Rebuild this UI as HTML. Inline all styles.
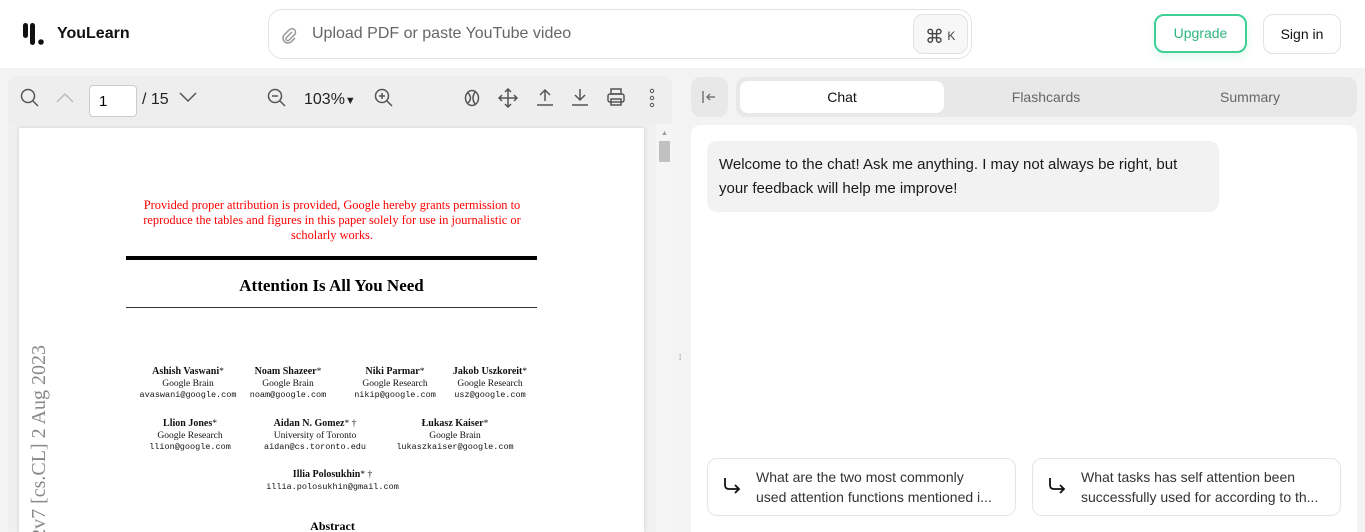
<!DOCTYPE html>
<html style="height:532px;overflow:hidden"><head><style>
*{margin:0;padding:0;box-sizing:border-box}
body{width:1365px;height:532px;overflow:hidden;background:#f3f3f3;font-family:"Liberation Sans",sans-serif;position:relative}
.hdr{position:absolute;left:0;top:0;width:1365px;height:68px;background:#fff}
.abs{position:absolute}
.serif{font-family:"Liberation Serif",serif}
.ic{position:absolute;stroke:#555;fill:none;stroke-width:1.5}
.au{position:absolute;text-align:center;font-family:"Liberation Serif",serif;font-size:9.5px;line-height:11.5px;color:#111}
.au b{font-size:10px}
.au .m{font-family:"Liberation Mono",monospace;font-size:8.5px}
</style></head><body>
<div class="hdr"></div>
<svg class="abs" style="left:22px;top:22px" width="30" height="24" viewBox="0 0 30 24"><rect x="1" y="1" width="5" height="15" rx="2.5" fill="#111"/><rect x="8" y="1" width="5" height="22" rx="2.5" fill="#111"/><circle cx="19" cy="20" r="2.8" fill="#111"/></svg>
<div class="abs" style="left:57px;top:25px;font-size:16px;font-weight:bold;color:#111">YouLearn</div>
<div class="abs" style="left:268px;top:9px;width:704px;height:50px;border:1px solid #e2e2e2;border-radius:14px;background:#fff"></div>
<svg class="abs" style="left:281px;top:26px" width="16" height="18" viewBox="0 0 16 18"><path d="M11 6 L5.5 11.5 a1.8 1.8 0 0 0 2.6 2.6 L13.5 8.6 a3.5 3.5 0 0 0 -5 -5 L3 9 a5 5 0 0 0 7 7 L14 12" stroke="#999" stroke-width="1.5" fill="none"/></svg>
<div class="abs" style="left:312px;top:25px;font-size:16px;color:#666">Upload PDF or paste YouTube video</div>
<div class="abs" style="left:913px;top:14px;width:55px;height:40px;border:1px solid #e2e2e2;border-radius:10px;background:#f7f7f7;font-size:12px;color:#444;padding:11px 0 0 11px"><span style="font-size:19px;vertical-align:-3px">⌘</span> K</div>
<div class="abs" style="left:1154px;top:14px;width:93px;height:39px;border:2px solid #3dcf95;border-radius:10px;color:#2fb57f;font-size:14px;text-align:center;line-height:35px;box-shadow:0 4px 8px rgba(61,207,149,.15)">Upgrade</div>
<div class="abs" style="left:1263px;top:14px;width:78px;height:40px;border:1px solid #e2e2e2;border-radius:10px;color:#111;font-size:14px;text-align:center;line-height:38px">Sign in</div>
<div class="abs" style="left:8px;top:76px;width:664px;height:48px;background:#eeeeee;border-radius:8px 8px 0 0"></div>
<svg class="ic" style="left:20px;top:88px" width="20" height="20"><circle cx="8" cy="8" r="6.5"/><path d="M13 13 L18 18"/></svg>
<svg class="ic" style="left:56px;top:92px;stroke:#bbb" width="20" height="12"><path d="M1 10 L9 2 L17 10"/></svg>
<div class="abs" style="left:89px;top:85px;width:48px;height:32px;border:1px solid #ccc;border-radius:4px;background:#fff;font-size:15px;padding:7px 0 0 9px">1</div>
<div class="abs" style="left:142px;top:91px;font-size:16px;color:#222">/ 15</div>
<svg class="ic" style="left:179px;top:91px" width="20" height="12"><path d="M1 2 L9 10 L17 2"/></svg>
<svg class="ic" style="left:267px;top:88px" width="20" height="20"><circle cx="8" cy="8" r="6.5"/><path d="M13 13 L18 18 M5 8 H11"/></svg>
<div class="abs" style="left:304px;top:91px;font-size:16px;color:#222">103%<span style="font-size:11px">▼</span></div>
<svg class="ic" style="left:374px;top:88px" width="20" height="20"><circle cx="8" cy="8" r="6.5"/><path d="M13 13 L18 18 M5 8 H11 M8 5 V11"/></svg>
<svg class="ic" style="left:463px;top:88px" width="18" height="20"><ellipse cx="9" cy="10" rx="6.5" ry="7.5"/><path d="M5 5 Q10 10 5 15 M12 4 Q8 10 12 16"/></svg>
<svg class="ic" style="left:498px;top:88px" width="20" height="20"><path d="M10 1 V19 M1 10 H19 M7 4 L10 1 L13 4 M7 16 L10 19 L13 16 M4 7 L1 10 L4 13 M16 7 L19 10 L16 13"/></svg>
<svg class="ic" style="left:535px;top:87px" width="20" height="20"><path d="M10 14 V3 M5 8 L10 3 L15 8 M2 18 H18"/></svg>
<svg class="ic" style="left:570px;top:87px" width="20" height="20"><path d="M10 2 V13 M5 8 L10 13 L15 8 M2 18 H18"/></svg>
<svg class="ic" style="left:606px;top:87px" width="20" height="20"><rect x="2" y="7" width="16" height="8" rx="2"/><rect x="5" y="2" width="10" height="5"/><rect x="5" y="12" width="10" height="6"/></svg>
<svg class="abs" style="left:648px;top:88px" width="8" height="20"><circle cx="4" cy="3" r="1.7" fill="none" stroke="#555"/><circle cx="4" cy="10" r="1.7" fill="none" stroke="#555"/><circle cx="4" cy="17" r="1.7" fill="none" stroke="#555"/></svg>
<div class="abs" style="left:8px;top:124px;width:648px;height:408px;background:#f0f0f0"></div>
<div class="abs" style="left:656px;top:124px;width:16px;height:408px;background:#f5f5f5"></div>
<div class="abs" style="left:661px;top:130px;font-size:7px;color:#999">▲</div>
<div class="abs" style="left:659px;top:141px;width:11px;height:21px;background:#c1c1c1"></div>
<div class="abs" style="left:19px;top:128px;width:625px;height:404px;background:#fff;box-shadow:0 0 4px rgba(0,0,0,.15);overflow:hidden">
<div class="abs serif" style="left:9px;top:217px;writing-mode:vertical-rl;transform:rotate(180deg);font-size:20px;color:#888;white-space:nowrap;height:330px;text-align:right">arXiv:1706.03762v7 [cs.CL] 2 Aug 2023</div>
</div>
<div class="abs serif" style="left:126px;top:198px;width:412px;text-align:center;color:#f00;font-size:12.4px;line-height:15px">Provided proper attribution is provided, Google hereby grants permission to reproduce the tables and figures in this paper solely for use in journalistic or scholarly works.</div>
<div class="abs" style="left:126px;top:256px;width:411px;height:4px;background:#000"></div>
<div class="abs serif" style="left:126px;top:276px;width:411px;text-align:center;font-size:17px;font-weight:bold">Attention Is All You Need</div>
<div class="abs" style="left:126px;top:307px;width:411px;height:1px;background:#333"></div>
<div class="au" style="left:128px;top:366px;width:120px"><b>Ashish Vaswani</b>*<br>Google Brain<br><span class="m">avaswani@google.com</span></div>
<div class="au" style="left:238px;top:366px;width:100px"><b>Noam Shazeer</b>*<br>Google Brain<br><span class="m">noam@google.com</span></div>
<div class="au" style="left:340px;top:366px;width:110px"><b>Niki Parmar</b>*<br>Google Research<br><span class="m">nikip@google.com</span></div>
<div class="au" style="left:440px;top:366px;width:100px"><b>Jakob Uszkoreit</b>*<br>Google Research<br><span class="m">usz@google.com</span></div>
<div class="au" style="left:130px;top:418px;width:120px"><b>Llion Jones</b>*<br>Google Research<br><span class="m">llion@google.com</span></div>
<div class="au" style="left:250px;top:418px;width:130px"><b>Aidan N. Gomez</b>* †<br>University of Toronto<br><span class="m">aidan@cs.toronto.edu</span></div>
<div class="au" style="left:385px;top:418px;width:140px"><b>Łukasz Kaiser</b>*<br>Google Brain<br><span class="m">lukaszkaiser@google.com</span></div>
<div class="au" style="left:250px;top:469px;width:165px"><b>Illia Polosukhin</b>* †<br><span class="m">illia.polosukhin@gmail.com</span></div>
<div class="abs serif" style="left:280px;top:519px;width:105px;text-align:center;font-size:12px;font-weight:bold">Abstract</div>
<div class="abs" style="left:679px;top:356px;font-size:8px;color:#666;line-height:3px">⁞</div>
<div class="abs" style="left:691px;top:77px;width:37px;height:40px;background:#e8e8e8;border-radius:10px"></div>
<svg class="ic" style="left:700px;top:88px;stroke:#777" width="18" height="18"><path d="M3 3 V15 M15 9 H7 M10 6 L7 9 L10 12"/></svg>
<div class="abs" style="left:736px;top:77px;width:621px;height:40px;background:#e8e8e8;border-radius:10px"></div>
<div class="abs" style="left:740px;top:81px;width:204px;height:32px;background:#fff;border-radius:8px;text-align:center;line-height:32px;font-size:14px;color:#111">Chat</div>
<div class="abs" style="left:946px;top:89px;width:200px;text-align:center;font-size:14px;color:#666">Flashcards</div>
<div class="abs" style="left:1150px;top:89px;width:200px;text-align:center;font-size:14px;color:#666">Summary</div>
<div class="abs" style="left:691px;top:125px;width:666px;height:407px;background:#fff;border-radius:10px 10px 0 0"></div>
<div class="abs" style="left:707px;top:141px;width:512px;height:71px;background:#f2f2f2;border-radius:10px;padding:12px 12px;font-size:15px;line-height:24px;color:#1a1a1a">Welcome to the chat! Ask me anything. I may not always be right, but your feedback will help me improve!</div>
<div class="abs" style="left:707px;top:458px;width:309px;height:58px;border:1px solid #e5e5e5;border-radius:10px"></div>
<div class="abs" style="left:1032px;top:458px;width:309px;height:58px;border:1px solid #e5e5e5;border-radius:10px"></div>
<svg class="ic" style="left:722px;top:476px;stroke:#111;stroke-width:1.8" width="20" height="20"><path d="M3 2 V9 Q3 13 7 13 H17 M13 9 L17 13 L13 17"/></svg>
<svg class="ic" style="left:1047px;top:476px;stroke:#111;stroke-width:1.8" width="20" height="20"><path d="M3 2 V9 Q3 13 7 13 H17 M13 9 L17 13 L13 17"/></svg>
<div class="abs" style="left:756px;top:467px;width:250px;font-size:14px;line-height:20px;color:#333">What are the two most commonly<br><span style="white-space:nowrap">used attention functions mentioned i...</span></div>
<div class="abs" style="left:1081px;top:467px;width:250px;font-size:14px;line-height:20px;color:#333">What tasks has self attention been<br><span style="white-space:nowrap">successfully used for according to th...</span></div>
</body></html>
